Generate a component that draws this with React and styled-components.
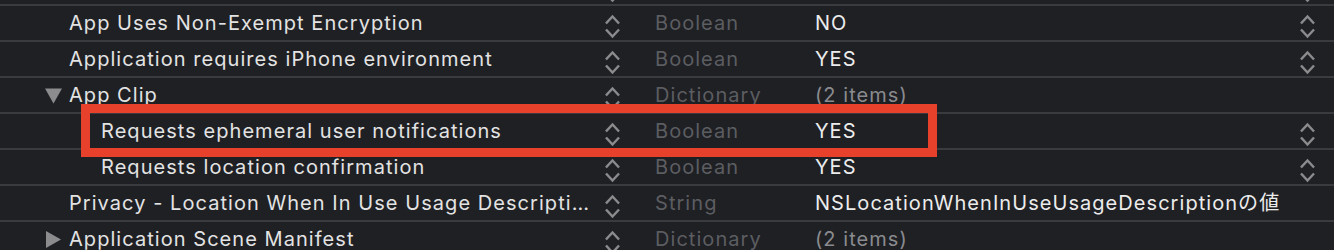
import styled, { createGlobalStyle } from 'styled-components';

const GlobalStyle = createGlobalStyle`
  html, body {
    margin: 0;
    padding: 0;
    background-color: #1f2024;
    overflow: hidden;
  }
  body {
    font-family: 'Inter', 'Noto Sans CJK JP', sans-serif;
    -webkit-font-smoothing: antialiased;
  }
`;

const List = styled.div`
  margin-top: -30px;
  width: 1334px;
  height: 280px;
  background-color: #1f2024;
`;

const Row = styled.div`
  position: relative;
  display: grid;
  grid-template-columns: 600px 55px 160px 1fr 44px;
  height: 34px;
  border-bottom: 2px solid #3a3b3f;
  font-size: 20px;
  letter-spacing: 1.05px;
  line-height: 34px;
`;

const KeyCell = styled.div`
  display: flex;
  align-items: center;
  min-width: 0;
  padding-left: ${props => (props.level === 1 ? 101 : props.toggle ? 45 : 69)}px;
  padding-right: 4px;
  color: #e3e3e3;
`;

const KeyText = styled.span`
  white-space: nowrap;
  overflow: hidden;
  text-overflow: ellipsis;
`;

const Disclosure = styled.svg`
  flex: none;
  width: 17px;
  height: 17px;
  margin-right: 7px;
  fill: #8c8c8f;
`;

const StepperCell = styled.div`
  display: flex;
  align-items: flex-end;
  padding-left: ${props => props.inset || 5}px;
  padding-bottom: 1px;
`;

const TypeCell = styled.div`
  color: #5c5d61;
  white-space: nowrap;
`;

const ValueCell = styled.div`
  color: ${props => (props.muted ? '#8a8b8e' : '#ececec')};
  white-space: nowrap;
`;

const Highlight = styled.div`
  position: absolute;
  left: 81px;
  top: -10px;
  width: 856px;
  height: 53px;
  box-sizing: border-box;
  border: 9px solid #e8412b;
  pointer-events: none;
`;

function Stepper() {
  return (
    <svg width="15" height="25" viewBox="0 0 15 25" fill="none" stroke="#8b8b8e" strokeWidth="2.4" strokeLinecap="square">
      <polyline points="1.8,8.6 7.5,2.4 13.2,8.6" />
      <polyline points="1.8,16.4 7.5,22.6 13.2,16.4" />
    </svg>
  );
}

function Triangle({ open }) {
  return (
    <Disclosure viewBox="0 0 17 17">
      {open ? <polygon points="0,1.5 17,1.5 8.5,16.5" /> : <polygon points="1,0 16,8.5 1,17" />}
    </Disclosure>
  );
}

const rows = [
  { key: '', type: '', value: '', stepper: true, valueStepper: true },
  { key: 'App Uses Non-Exempt Encryption', type: 'Boolean', value: 'NO', stepper: true, valueStepper: true },
  { key: 'Application requires iPhone environment', type: 'Boolean', value: 'YES', stepper: true, valueStepper: true },
  { key: 'App Clip', toggle: 'open', type: 'Dictionary', value: '(2 items)', muted: true, stepper: true },
  { key: 'Requests ephemeral user notifications', level: 1, type: 'Boolean', value: 'YES', stepper: true, valueStepper: true, marked: true },
  { key: 'Requests location confirmation', level: 1, type: 'Boolean', value: 'YES', stepper: true, valueStepper: true },
  { key: 'Privacy - Location When In Use Usage Description', type: 'String', value: 'NSLocationWhenInUseUsageDescriptionの値', stepper: true },
  { key: 'Application Scene Manifest', toggle: 'closed', type: 'Dictionary', value: '(2 items)', muted: true, stepper: true },
];

export default function App() {
  return (
    <>
      <GlobalStyle />
      <List>
        {rows.map((row, i) => (
          <Row key={i}>
            <KeyCell level={row.level} toggle={row.toggle}>
              {row.toggle && <Triangle open={row.toggle === 'open'} />}
              <KeyText>{row.key}</KeyText>
            </KeyCell>
            <StepperCell>{row.stepper && <Stepper />}</StepperCell>
            <TypeCell>{row.type}</TypeCell>
            <ValueCell muted={row.muted}>{row.value}</ValueCell>
            <StepperCell inset={10}>{row.valueStepper && <Stepper />}</StepperCell>
            {row.marked && <Highlight />}
          </Row>
        ))}
      </List>
    </>
  );
}
